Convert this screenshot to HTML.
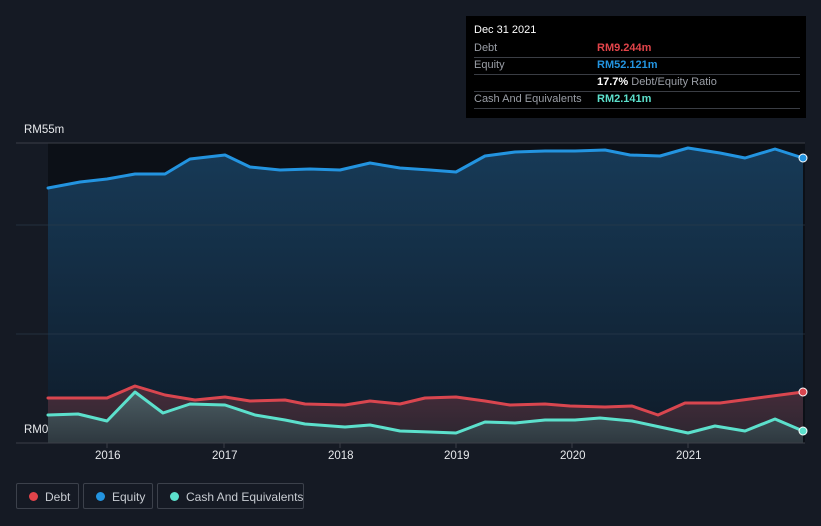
<!DOCTYPE html>
<html><head><meta charset="utf-8"><style>
body{margin:0;width:821px;height:526px;background:#151a24;font-family:"Liberation Sans",sans-serif;overflow:hidden;position:relative}
.tip{position:absolute;left:466px;top:16px;width:340px;height:102px;background:#000;color:#fff;font-size:11px}
.tip .r{position:absolute;left:8px;width:326px;border-bottom:1px solid #3a3d44;height:17px;line-height:17px}
.tip .l{color:#9a9ea6;position:absolute;left:0}
.tip .v{position:absolute;left:123px;font-weight:bold;white-space:nowrap}
.leg{position:absolute;top:483px;height:26px;border:1px solid #3c414b;border-radius:2px;color:#c8ccd2;font-size:12px;line-height:26px;box-sizing:border-box;white-space:nowrap}
.leg i{position:absolute;left:12px;top:8px;width:9px;height:9px;border-radius:50%}
.ax{position:absolute;color:#e6e8eb;font-size:11.5px}
</style></head><body>
<svg width="821" height="526" style="position:absolute;left:0;top:0">
<defs>
<linearGradient id="eq" x1="0" y1="0" x2="0" y2="1"><stop offset="0" stop-color="#173a57"/><stop offset="1" stop-color="#0f1b29"/></linearGradient>
<linearGradient id="db" x1="0" y1="0" x2="0" y2="1"><stop offset="0" stop-color="#472c3a"/><stop offset="1" stop-color="#2a2630"/></linearGradient>
<linearGradient id="cs" x1="0" y1="0" x2="0" y2="1"><stop offset="0" stop-color="#4c5d63"/><stop offset="1" stop-color="#2e383f"/></linearGradient>
</defs>
<rect x="48" y="143" width="757" height="300" fill="#0c1017"/>
<polygon fill="url(#eq)" points="48,443 48,188 80,182 107,179 135,174 165,174 190,159 225,155 250,167 280,170 310,169 340,170 370,163 400,168 430,170 456,172 485,156 515,152 545,151 575,151 605,150 630,155 660,156 688,148 720,153 745,158 775,149 803,158 803,443"/>
<line x1="16" y1="143" x2="805" y2="143" stroke="#3b3f47"/>
<line x1="16" y1="225" x2="805" y2="225" stroke="#2a3a4a" stroke-opacity=".7"/>
<line x1="16" y1="334" x2="805" y2="334" stroke="#2a3a4a" stroke-opacity=".7"/>
<polygon fill="url(#db)" points="48,443 48,398 107,398 135,386 165,395 195,400 225,397 250,401 285,400 305,404 345,405 370,401 400,404 425,398 456,397 485,401 510,405 545,404 570,406 605,407 632,406 658,415 685,403 720,403 750,399 803,392 803,443"/>
<polygon fill="url(#cs)" points="48,443 48,415 78,414 107,421 135,392 163,413 190,404 225,405 255,415 285,420 305,424 345,427 370,425 400,431 430,432 456,433 485,422 515,423 545,420 575,420 600,418 632,421 660,427 688,433 715,426 745,431 775,419 803,431 803,443"/>
<g fill="none" stroke-width="3" stroke-linejoin="round" stroke-linecap="round">
<polyline stroke="#2394e0" points="48,188 80,182 107,179 135,174 165,174 190,159 225,155 250,167 280,170 310,169 340,170 370,163 400,168 430,170 456,172 485,156 515,152 545,151 575,151 605,150 630,155 660,156 688,148 720,153 745,158 775,149 803,158"/>
<polyline stroke="#d9464f" points="48,398 107,398 135,386 165,395 195,400 225,397 250,401 285,400 305,404 345,405 370,401 400,404 425,398 456,397 485,401 510,405 545,404 570,406 605,407 632,406 658,415 685,403 720,403 750,399 803,392"/>
<polyline stroke="#5ce0cc" points="48,415 78,414 107,421 135,392 163,413 190,404 225,405 255,415 285,420 305,424 345,427 370,425 400,431 430,432 456,433 485,422 515,423 545,420 575,420 600,418 632,421 660,427 688,433 715,426 745,431 775,419 803,431"/>
</g>
<line x1="16" y1="443" x2="805" y2="443" stroke="#3b3f47"/>
<g stroke="#3b3f47"><line x1="107" y1="443" x2="107" y2="448"/><line x1="224" y1="443" x2="224" y2="448"/><line x1="340" y1="443" x2="340" y2="448"/><line x1="456" y1="443" x2="456" y2="448"/><line x1="572" y1="443" x2="572" y2="448"/><line x1="688" y1="443" x2="688" y2="448"/></g>
<circle cx="803" cy="158" r="4" fill="#2394e0" stroke="#fff" stroke-width="1"/>
<circle cx="803" cy="392" r="4" fill="#d9464f" stroke="#fff" stroke-width="1"/>
<circle cx="803" cy="431" r="4" fill="#5ce0cc" stroke="#fff" stroke-width="1"/>
</svg>
<div class="ax" style="left:24px;top:124px">RM55m</div>
<div class="ax" style="left:24px;top:424px">RM0</div>
<div class="ax" style="left:95px;top:450px">2016</div>
<div class="ax" style="left:212px;top:450px">2017</div>
<div class="ax" style="left:328px;top:450px">2018</div>
<div class="ax" style="left:444px;top:450px">2019</div>
<div class="ax" style="left:560px;top:450px">2020</div>
<div class="ax" style="left:676px;top:450px">2021</div>
<div class="tip">
<div style="position:absolute;left:8px;top:8px">Dec 31 2021</div>
<div class="r" style="top:24px"><span class="l">Debt</span><span class="v" style="color:#e2444a">RM9.244m</span></div>
<div class="r" style="top:41px"><span class="l">Equity</span><span class="v" style="color:#2394e0">RM52.121m</span></div>
<div class="r" style="top:58px"><span class="v" style="color:#fff">17.7% <span style="color:#9a9ea6;font-weight:normal">Debt/Equity Ratio</span></span></div>
<div class="r" style="top:75px"><span class="l">Cash And Equivalents</span><span class="v" style="color:#5ce0cc">RM2.141m</span></div>
</div>
<div class="leg" style="left:16px;width:63px"><i style="background:#e2444a"></i><span style="position:absolute;left:28px">Debt</span></div>
<div class="leg" style="left:83px;width:70px"><i style="background:#2394e0"></i><span style="position:absolute;left:28px">Equity</span></div>
<div class="leg" style="left:157px;width:147px"><i style="background:#5ce0cc"></i><span style="position:absolute;left:28px">Cash And Equivalents</span></div>
</body></html>
